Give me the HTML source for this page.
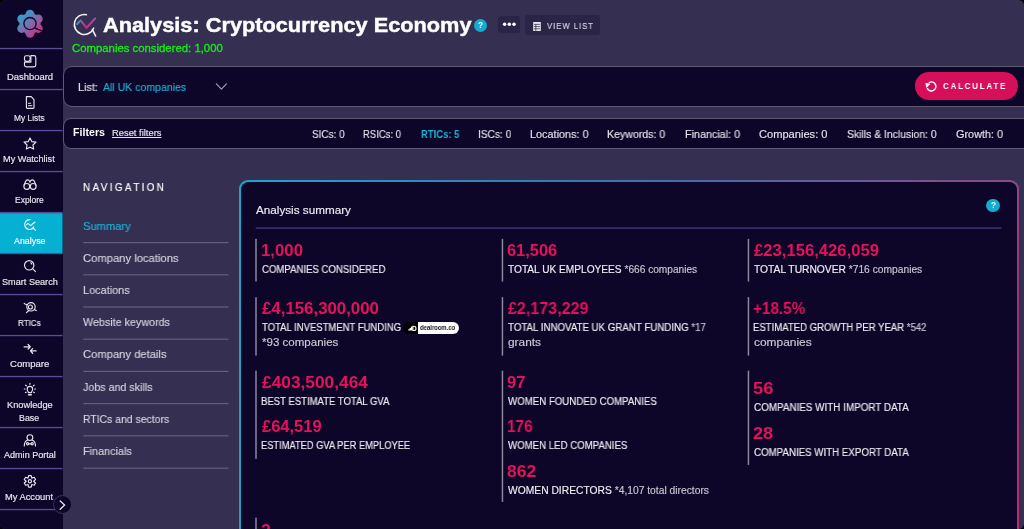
<!DOCTYPE html>
<html><head><meta charset="utf-8">
<style>
*{box-sizing:border-box;margin:0;padding:0}
html,body{width:1024px;height:529px;overflow:hidden;background:#000}
body{font-family:"Liberation Sans",sans-serif;color:#fff;position:relative}
#app{position:absolute;left:0;top:0;width:1024px;height:529px;background:#353052;border-radius:5.5px;overflow:hidden}
.r{position:absolute}
.tx{position:absolute;white-space:nowrap;line-height:1;transform-origin:0 0;will-change:transform}
.st{-webkit-text-stroke:0.15px currentColor}
.sl{position:absolute;left:0;width:62px;height:1.5px;background:#4e4596}
.nl{position:absolute;left:83px;width:145.5px;height:1.5px;background:#615c7a}
.sb{position:absolute;width:1.5px;background:#8b879a}
svg{position:absolute;overflow:visible}
</style></head><body>
<div id="app">
  <!-- sidebar -->
  <div class="r" style="left:0;top:0;width:62.5px;height:529px;background:#0e0629"></div>

  <svg style="left:0;top:0" width="63" height="529" viewBox="0 0 63 529"><rect x="0" y="213.1" width="62.6" height="40.1" fill="#05b0d2"/><rect x="0" y="47.9" width="62.6" height="1.3" fill="#564c98"/><rect x="0" y="88.9" width="62.6" height="1.3" fill="#564c98"/><rect x="0" y="129.9" width="62.6" height="1.3" fill="#564c98"/><rect x="0" y="170.9" width="62.6" height="1.3" fill="#564c98"/><rect x="0" y="211.9" width="62.6" height="1.3" fill="#564c98"/><rect x="0" y="252.9" width="62.6" height="1.3" fill="#564c98"/><rect x="0" y="293.9" width="62.6" height="1.3" fill="#564c98"/><rect x="0" y="334.9" width="62.6" height="1.3" fill="#564c98"/><rect x="0" y="375.9" width="62.6" height="1.3" fill="#564c98"/><rect x="0" y="426.9" width="62.6" height="1.3" fill="#564c98"/><rect x="0" y="467.9" width="62.6" height="1.3" fill="#564c98"/><rect x="0" y="508.9" width="62.6" height="1.3" fill="#564c98"/></svg>
  <!-- logo -->
  <svg style="left:0;top:0" width="62" height="48" viewBox="0 0 62 48">
    <defs><linearGradient id="lg" x1="-12" y1="-12" x2="12" y2="12" gradientUnits="userSpaceOnUse"><stop offset="0" stop-color="#17b2d8"/><stop offset="0.5" stop-color="#7a6cab"/><stop offset="1" stop-color="#e51f78"/></linearGradient></defs>
    <g transform="translate(30 23.7)" fill="url(#lg)">
      <circle r="10.6"/>
      <circle cx="0" cy="-9.6" r="4.4"/><circle cx="8.31" cy="-4.8" r="4.4"/><circle cx="8.31" cy="4.8" r="4.4"/>
      <circle cx="0" cy="9.6" r="4.4"/><circle cx="-8.31" cy="4.8" r="4.4"/><circle cx="-8.31" cy="-4.8" r="4.4"/>
    </g>
    <circle cx="30" cy="23.6" r="6.1" fill="none" stroke="#0e0629" stroke-width="1.3"/>
    <line x1="34.6" y1="27.8" x2="41.6" y2="30.8" stroke="#0e0629" stroke-width="1.3"/>
  </svg>
  <!-- sidebar icons -->
  <svg style="left:0;top:0" width="62" height="529" viewBox="0 0 62 529" fill="none" stroke="#e6e3ee" stroke-width="1.15" stroke-linecap="round" stroke-linejoin="round">
    <!-- dashboard -->
    <rect x="24.5" y="55.7" width="5.6" height="5.6" rx="1.7"/>
    <path d="M30.9,55.6 H33.9 Q35.8,55.6 35.8,57.5 V65 Q35.8,66.9 33.9,66.9 H26.4 Q24.5,66.9 24.5,65 V62.1 H30.9 Z"/>
    <!-- my lists -->
    <path d="M26.4,96.6 H31.2 L34,99.6 V107.4 Q34,108.3 33.1,108.3 H27.3 Q26.4,108.3 26.4,107.4 Z"/>
    <path d="M28.4,103.3 H30.6 M28.4,105.7 H31.8" stroke-width="1"/>
    <!-- star -->
    <path d="M30,137.9 L31.85,141.65 L36,142.15 L32.95,145 L33.7,149.1 L30,147.15 L26.3,149.1 L27.05,145 L24,142.15 L28.15,141.65 Z"/>
    <!-- binoculars -->
    <circle cx="26.8" cy="186.4" r="2.9"/><circle cx="33.2" cy="186.4" r="2.9"/>
    <path d="M24,185.2 L25.8,181 Q27.6,178.8 29.4,180.8 L30,182.2 L30.6,180.8 Q32.4,178.8 34.2,181 L36,185.2"/>
    <!-- analyse -->
    <path d="M30.2,219.7 A4.9,4.9 0 1 0 32.8,228.2" stroke="#f2fbfd"/>
    <path d="M26.4,224.6 L27.9,223.4 L30.6,225.6 L35,222" stroke="#f2fbfd"/>
    <path d="M33,227.9 L35.6,230.4 M33.8,226.8 L33.2,228.2" stroke="#f2fbfd"/>
    <!-- smart search -->
    <circle cx="29.2" cy="265.3" r="4.7"/>
    <path d="M32.6,268.7 L35.5,271.6"/>
    <path d="M30.8,262.8 A2.4,2.4 0 0 1 31.8,264.2"/>
    <!-- rtics -->
    <circle cx="31" cy="306.8" r="4.2"/>
    <circle cx="30.4" cy="307" r="2"/>
    <path d="M24.2,303.4 Q25.6,305 27.2,304.6 M26.4,312.6 L28.6,310.8 M34.4,309.4 L36.2,310.6"/>
    <!-- compare -->
    <path d="M24.1,346.8 H30 M28.1,344.5 L30.2,346.8 L28.1,349.1 M36,350.9 H30.6 M32.6,348.6 L30.5,350.9 L32.6,353.3" stroke-width="1.3"/>
    <!-- bulb -->
    <path d="M28.3,392.6 V391.9 Q27.2,390.8 27.2,389 A2.7,2.7 0 0 1 32.6,389 Q32.6,390.8 31.5,391.9 V392.6 Z"/>
    <path d="M28.5,394.7 H31.3" stroke-width="1.4"/>
    <path d="M29.9,383.3 V384.3 M25.6,385.2 L26.4,385.8 M34.2,385.2 L33.4,385.8 M24.3,389 H25.1 M34.7,389 H35.5 M25.4,392.6 L26.2,392.2 M34.4,392.6 L33.6,392.2"/>
    <!-- admin -->
    <circle cx="29.9" cy="437.6" r="2.9"/>
    <path d="M24.3,446 Q24.3,441.2 27.4,440.2 M35.5,446 Q35.5,441.2 32.4,440.2"/>
    <circle cx="27.6" cy="443.8" r="1.1"/><circle cx="32.2" cy="443.8" r="1.1"/><path d="M28.7,443.8 H31.1"/>
    <!-- gear -->
    <path d="M28.57,475.55 L31.23,475.55 L31.75,478.10 L34.21,477.28 L35.54,479.58 L33.60,481.30 L35.54,483.02 L34.21,485.32 L31.75,484.50 L31.23,487.05 L28.57,487.05 L28.05,484.50 L25.59,485.32 L24.26,483.02 L26.20,481.30 L24.26,479.58 L25.59,477.28 L28.05,478.10 Z"/>
    <circle cx="29.9" cy="481.3" r="1.6"/>
  </svg>
  <!-- sidebar toggle -->
  <div class="r" style="left:52.5px;top:495px;width:19px;height:19px;border-radius:50%;background:#0e0629;border:1px solid #3a325c"></div>
  <svg style="left:0;top:0" width="80" height="529" viewBox="0 0 80 529"><path d="M60.2,501 L64.6,505 L60.2,509.2" fill="none" stroke="#e6e3ee" stroke-width="1.3" stroke-linecap="round"/></svg>

  <!-- header icon -->
  <svg style="left:0;top:0" width="110" height="50" viewBox="0 0 110 50">
    <defs><linearGradient id="hg" x1="76" y1="0" x2="96" y2="0" gradientUnits="userSpaceOnUse"><stop offset="0" stop-color="#22a8d8"/><stop offset="0.5" stop-color="#d1287c"/><stop offset="1" stop-color="#8e5fb0"/></linearGradient></defs>
    <path d="M86.4,14.7 A10,10 0 1 0 93.6,28.2" fill="none" stroke="#f4f2f8" stroke-width="1.6" stroke-linecap="round"/>
    <path d="M92.4,29.6 L95.6,36" stroke="#f4f2f8" stroke-width="1.6" stroke-linecap="round"/>
    <path d="M77.2,24.2 L80.6,20.4 L86.6,27.8 L95.2,18.4" fill="none" stroke="url(#hg)" stroke-width="2" stroke-linecap="round" stroke-linejoin="round"/>
  </svg>
  <!-- ? badge -->
  <div class="r" style="left:474px;top:19px;width:13.4px;height:13.4px;border-radius:50%;background:#12acd0"></div>
  <div class="tx" style="left:478.3px;top:21px;font-size:8.4px;font-weight:700;color:#e8f7fb">?</div>
  <!-- ... button -->
  <div class="r" style="left:498.4px;top:15.5px;width:22px;height:17px;border-radius:3px;background:#2a2446"></div>
  <svg style="left:0;top:0" width="530" height="40" viewBox="0 0 530 40"><circle cx="504.6" cy="24.3" r="1.75" fill="#fff"/><circle cx="509.3" cy="24.3" r="1.75" fill="#fff"/><circle cx="514" cy="24.3" r="1.75" fill="#fff"/></svg>
  <!-- view list button -->
  <div class="r" style="left:525.2px;top:15.2px;width:75px;height:20px;border-radius:3px;background:#2a2446"></div>
  <svg style="left:0;top:0" width="600" height="40" viewBox="0 0 600 40"><rect x="533.2" y="22" width="7.6" height="9" fill="#e8e6ef"/><path d="M534,24.4 H540 M534,26.6 H540 M534,28.8 H540 M535.8,24.4 V31" stroke="#2a2446" stroke-width="0.7"/></svg>

  <!-- list bar -->
  <div class="r" style="left:62.8px;top:66.3px;width:990px;height:40.8px;background:#0e0629;border:1px solid #5d5a72;border-radius:9px"></div>
  <svg style="left:0;top:0" width="240" height="110" viewBox="0 0 240 110"><path d="M216.4,83.8 L221.4,89.2 L226.4,83.8" fill="none" stroke="#9c98ad" stroke-width="1.2" stroke-linecap="round" stroke-linejoin="round"/></svg>
  <div class="r" style="left:914.8px;top:72px;width:103.2px;height:27.5px;border-radius:14px;background:#d60f5a"></div>
  <svg style="left:0;top:0" width="1024" height="110" viewBox="0 0 1024 110"><path d="M929.4,82.4 A4.5,4.5 0 1 1 927.4,88.6" fill="none" stroke="#fff" stroke-width="1.5" stroke-linecap="round"/><path d="M925.8,83.4 L929.8,83.9 L926.6,87.4 Z" fill="#fff" stroke="#fff" stroke-width="0.7" stroke-linejoin="round"/></svg>

  <!-- filter bar -->
  <div class="r" style="left:62.8px;top:117.8px;width:990px;height:31.5px;background:#0e0629;border:1px solid #5d5a72;border-radius:8px"></div>

  <!-- nav lines -->

  <svg style="left:0;top:0" width="240" height="529" viewBox="0 0 240 529"><rect x="83.3" y="242.0" width="145.2" height="1.2" fill="#63607c"/><rect x="83.3" y="274.2" width="145.2" height="1.2" fill="#63607c"/><rect x="83.3" y="306.4" width="145.2" height="1.2" fill="#63607c"/><rect x="83.3" y="338.6" width="145.2" height="1.2" fill="#63607c"/><rect x="83.3" y="370.8" width="145.2" height="1.2" fill="#63607c"/><rect x="83.3" y="403.0" width="145.2" height="1.2" fill="#63607c"/><rect x="83.3" y="435.2" width="145.2" height="1.2" fill="#63607c"/><rect x="83.3" y="467.6" width="145.2" height="1.2" fill="#63607c"/></svg>
  <!-- card -->
  <div class="r" style="left:238.9px;top:180.2px;width:780px;height:420px;border-radius:9px;background:linear-gradient(100deg,#16a8cc 0%,#23a0c8 4%,#3080b0 33%,#5068a0 56%,#8a4a88 91%,#963672 94%,#c42a6a 100%)"></div>
  <div class="r" style="left:240.9px;top:182.2px;width:776px;height:416px;border-radius:7.5px;background:#0e0629"></div>
  <svg style="left:0;top:0" width="1024" height="240" viewBox="0 0 1024 240"><rect x="255.8" y="227.4" width="745.6" height="1.3" fill="#473d7c"/></svg>
  <div class="r" style="left:986.4px;top:198.6px;width:13.4px;height:13.4px;border-radius:50%;background:#12acd0"></div>
  <div class="tx" style="left:990.7px;top:200.8px;font-size:8.4px;font-weight:700;color:#e8f7fb">?</div>

  <!-- stat borders -->

  <svg style="left:0;top:0" width="1024" height="529" viewBox="0 0 1024 529"><rect x="255.25" y="238.9" width="1.5" height="42.6" fill="#8b879a"/><rect x="501.7" y="238.9" width="1.5" height="42.6" fill="#8b879a"/><rect x="747.7" y="238.9" width="1.5" height="42.6" fill="#8b879a"/><rect x="255.25" y="297.1" width="1.5" height="58.5" fill="#8b879a"/><rect x="501.7" y="297.1" width="1.5" height="58.5" fill="#8b879a"/><rect x="747.7" y="297.1" width="1.5" height="58.5" fill="#8b879a"/><rect x="255.25" y="370.70000000000005" width="1.5" height="88.2" fill="#8b879a"/><rect x="501.7" y="370.70000000000005" width="1.5" height="131.2" fill="#8b879a"/><rect x="747.7" y="370.70000000000005" width="1.5" height="94.2" fill="#8b879a"/><rect x="255.25" y="517.6" width="1.5" height="20.2" fill="#8b879a"/></svg>
  <!-- dealroom badge -->
  <div class="r" style="left:417px;top:321.9px;width:42.2px;height:11.9px;border-radius:0 6px 6px 0;background:#fff"></div>
  <div class="r" style="left:402.5px;top:321.9px;width:15.5px;height:11.9px;border-radius:6px 0 0 6px;background:#000"></div>
  <svg style="left:0;top:0" width="470" height="340" viewBox="0 0 470 340"><path d="M408.3,330.6 v-1.4 h1.3 v-1.3 h1.3 v-1.4 h1.6 v4.1 Z" fill="#fff"/><path d="M412.9,326.3 h1 a2.1,2.1 0 0 1 0,4.2 h-1 Z" fill="none" stroke="#fff" stroke-width="1.1"/></svg>

<div class="tx st" id="t0" style="left:6.54px;top:72.70px;font-size:8.4px;font-weight:400;color:#e9e7ef;letter-spacing:0px;transform:scaleX(1.1255);">Dashboard</div>
<div class="tx st" id="t1" style="left:14.20px;top:113.70px;font-size:8.4px;font-weight:400;color:#e9e7ef;letter-spacing:0px;transform:scaleX(0.9950);">My Lists</div>
<div class="tx st" id="t2" style="left:3.45px;top:154.70px;font-size:8.4px;font-weight:400;color:#e9e7ef;letter-spacing:0px;transform:scaleX(1.0979);">My Watchlist</div>
<div class="tx st" id="t3" style="left:15.39px;top:196.10px;font-size:8.4px;font-weight:400;color:#e9e7ef;letter-spacing:0px;transform:scaleX(1.0126);">Explore</div>
<div class="tx st" id="t4" style="left:14.36px;top:236.60px;font-size:8.4px;font-weight:400;color:#f4fbfd;letter-spacing:0px;transform:scaleX(1.0567);">Analyse</div>
<div class="tx st" id="t5" style="left:1.83px;top:277.90px;font-size:8.4px;font-weight:400;color:#e9e7ef;letter-spacing:0px;transform:scaleX(1.0897);">Smart Search</div>
<div class="tx st" id="t6" style="left:18.22px;top:319.00px;font-size:8.4px;font-weight:400;color:#e9e7ef;letter-spacing:0px;transform:scaleX(0.9609);">RTICs</div>
<div class="tx st" id="t7" style="left:10.12px;top:359.90px;font-size:8.4px;font-weight:400;color:#e9e7ef;letter-spacing:0px;transform:scaleX(1.1382);">Compare</div>
<div class="tx st" id="t8" style="left:6.95px;top:401.00px;font-size:8.4px;font-weight:400;color:#e9e7ef;letter-spacing:0px;transform:scaleX(1.1043);">Knowledge</div>
<div class="tx st" id="t9" style="left:19.27px;top:413.70px;font-size:8.4px;font-weight:400;color:#e9e7ef;letter-spacing:0px;transform:scaleX(1.0541);">Base</div>
<div class="tx st" id="t10" style="left:4.27px;top:451.40px;font-size:8.4px;font-weight:400;color:#e9e7ef;letter-spacing:0px;transform:scaleX(1.0813);">Admin Portal</div>
<div class="tx st" id="t11" style="left:5.35px;top:492.70px;font-size:8.4px;font-weight:400;color:#e9e7ef;letter-spacing:0px;transform:scaleX(1.1093);">My Account</div>
<div class="tx" id="t12" style="left:102.88px;top:15.20px;font-size:20.8px;font-weight:700;color:#ffffff;letter-spacing:0px;transform:scaleX(1.0455);-webkit-text-stroke:0.45px #fff;">Analysis: Cryptocurrency Economy</div>
<div class="tx st" id="t13" style="left:72.46px;top:42.80px;font-size:10.6px;font-weight:400;color:#12f012;letter-spacing:0px;transform:scaleX(1.0714);-webkit-text-stroke:0.3px #12f012;">Companies considered: 1,000</div>
<div class="tx st" id="t14" style="left:547.10px;top:21.20px;font-size:9.8px;font-weight:400;color:#dcd8e6;letter-spacing:1.2px;transform:scaleX(0.7914);">VIEW LIST</div>
<div class="tx st" id="t15" style="left:77.78px;top:81.70px;font-size:11.3px;font-weight:400;color:#e2dfea;letter-spacing:0px;transform:scaleX(0.9610);">List:</div>
<div class="tx st" id="t16" style="left:103.00px;top:81.70px;font-size:11.3px;font-weight:400;color:#1cb2d8;letter-spacing:0px;transform:scaleX(0.9326);">All UK companies</div>
<div class="tx" id="t17" style="left:943.48px;top:82.00px;font-size:9.3px;font-weight:700;color:#ffffff;letter-spacing:2.0px;transform:scaleX(0.8641);">CALCULATE</div>
<div class="tx" id="t18" style="left:73.19px;top:127.40px;font-size:10.5px;font-weight:700;color:#ffffff;letter-spacing:0px;transform:scaleX(1.0146);">Filters</div>
<div class="tx st" id="t19" style="left:111.78px;top:129.40px;font-size:9.0px;font-weight:400;color:#e6e3ee;letter-spacing:0px;transform:scaleX(1.0404);text-decoration:underline;text-underline-offset:1px;">Reset filters</div>
<div class="tx st" id="t20" style="left:311.57px;top:128.60px;font-size:10.9px;font-weight:400;color:#e3e0ea;letter-spacing:0px;transform:scaleX(0.9135);">SICs: 0</div>
<div class="tx st" id="t21" style="left:363.15px;top:128.60px;font-size:10.9px;font-weight:400;color:#e3e0ea;letter-spacing:0px;transform:scaleX(0.8702);">RSICs: 0</div>
<div class="tx" id="t22" style="left:420.75px;top:128.60px;font-size:10.9px;font-weight:600;color:#1cb2d8;letter-spacing:0px;transform:scaleX(0.8694);">RTICs: 5</div>
<div class="tx st" id="t23" style="left:478.00px;top:128.60px;font-size:10.9px;font-weight:400;color:#e3e0ea;letter-spacing:0px;transform:scaleX(0.9295);">ISCs: 0</div>
<div class="tx st" id="t24" style="left:529.75px;top:128.60px;font-size:10.9px;font-weight:400;color:#e3e0ea;letter-spacing:0px;transform:scaleX(0.9957);">Locations: 0</div>
<div class="tx st" id="t25" style="left:607.17px;top:128.60px;font-size:10.9px;font-weight:400;color:#e3e0ea;letter-spacing:0px;transform:scaleX(0.9729);">Keywords: 0</div>
<div class="tx st" id="t26" style="left:684.96px;top:128.60px;font-size:10.9px;font-weight:400;color:#e3e0ea;letter-spacing:0px;transform:scaleX(0.9881);">Financial: 0</div>
<div class="tx st" id="t27" style="left:759.09px;top:128.60px;font-size:10.9px;font-weight:400;color:#e3e0ea;letter-spacing:0px;transform:scaleX(1.0195);">Companies: 0</div>
<div class="tx st" id="t28" style="left:847.06px;top:128.60px;font-size:10.9px;font-weight:400;color:#e3e0ea;letter-spacing:0px;transform:scaleX(0.9551);">Skills &amp; Inclusion: 0</div>
<div class="tx st" id="t29" style="left:955.95px;top:128.60px;font-size:10.9px;font-weight:400;color:#e3e0ea;letter-spacing:0px;transform:scaleX(0.9947);">Growth: 0</div>
<div class="tx st" id="t30" style="left:82.62px;top:182.40px;font-size:10.9px;font-weight:400;color:#ffffff;letter-spacing:2.6px;transform:scaleX(0.9097);">NAVIGATION</div>
<div class="tx st" id="t31" style="left:82.82px;top:221.00px;font-size:11.5px;font-weight:400;color:#1cb2d8;letter-spacing:0px;transform:scaleX(0.9682);">Summary</div>
<div class="tx st" id="t32" style="left:82.81px;top:253.20px;font-size:11.5px;font-weight:400;color:#d6d3de;letter-spacing:0px;transform:scaleX(0.9773);">Company locations</div>
<div class="tx st" id="t33" style="left:82.59px;top:285.00px;font-size:11.5px;font-weight:400;color:#d6d3de;letter-spacing:0px;transform:scaleX(0.9492);">Locations</div>
<div class="tx st" id="t34" style="left:83.30px;top:317.20px;font-size:11.5px;font-weight:400;color:#d6d3de;letter-spacing:0px;transform:scaleX(0.9333);">Website keywords</div>
<div class="tx st" id="t35" style="left:82.81px;top:349.40px;font-size:11.5px;font-weight:400;color:#d6d3de;letter-spacing:0px;transform:scaleX(0.9753);">Company details</div>
<div class="tx st" id="t36" style="left:83.30px;top:381.80px;font-size:11.5px;font-weight:400;color:#d6d3de;letter-spacing:0px;transform:scaleX(0.9302);">Jobs and skills</div>
<div class="tx st" id="t37" style="left:82.62px;top:414.00px;font-size:11.5px;font-weight:400;color:#d6d3de;letter-spacing:0px;transform:scaleX(0.9074);">RTICs and sectors</div>
<div class="tx st" id="t38" style="left:82.59px;top:446.00px;font-size:11.5px;font-weight:400;color:#d6d3de;letter-spacing:0px;transform:scaleX(0.9438);">Financials</div>
<div class="tx st" id="t39" style="left:255.80px;top:203.90px;font-size:11.7px;font-weight:400;color:#f0eef4;letter-spacing:0px;transform:scaleX(1.0011);">Analysis summary</div>
<div class="tx" id="t40" style="left:260.78px;top:241.50px;font-size:16.4px;font-weight:700;color:#e3125b;letter-spacing:0px;transform:scaleX(1.0228);">1,000</div>
<div class="tx st" id="t41" style="left:261.56px;top:264.80px;font-size:10.0px;font-weight:400;color:#efedf3;letter-spacing:0px;transform:scaleX(0.9591);">COMPANIES CONSIDERED</div>
<div class="tx" id="t42" style="left:507.40px;top:241.50px;font-size:16.4px;font-weight:700;color:#e3125b;letter-spacing:0px;transform:scaleX(0.9949);">61,506</div>
<div class="tx st" id="t43" style="left:507.90px;top:264.80px;font-size:10.0px;font-weight:400;color:#efedf3;letter-spacing:0px;transform:scaleX(1.0139);">TOTAL UK EMPLOYEES <span style="color:#cbc7d3">*666 companies</span></div>
<div class="tx" id="t44" style="left:753.90px;top:241.50px;font-size:16.4px;font-weight:700;color:#e3125b;letter-spacing:0px;transform:scaleX(1.0163);">£23,156,426,059</div>
<div class="tx st" id="t45" style="left:753.90px;top:264.80px;font-size:10.0px;font-weight:400;color:#efedf3;letter-spacing:0px;transform:scaleX(1.0250);">TOTAL TURNOVER <span style="color:#cbc7d3">*716 companies</span></div>
<div class="tx" id="t46" style="left:261.80px;top:300.10px;font-size:16.4px;font-weight:700;color:#e3125b;letter-spacing:0px;transform:scaleX(1.0264);">£4,156,300,000</div>
<div class="tx st" id="t47" style="left:261.80px;top:323.30px;font-size:10.0px;font-weight:400;color:#efedf3;letter-spacing:0px;transform:scaleX(0.9509);">TOTAL INVESTMENT FUNDING</div>
<div class="tx st" id="t48" style="left:261.80px;top:338.30px;font-size:10.0px;font-weight:400;color:#efedf3;letter-spacing:0px;transform:scaleX(1.1545);"><span style="color:#cbc7d3">*93 companies</span></div>
<div class="tx" id="t49" style="left:507.90px;top:300.10px;font-size:16.4px;font-weight:700;color:#e3125b;letter-spacing:0px;transform:scaleX(0.9804);">£2,173,229</div>
<div class="tx st" id="t50" style="left:507.90px;top:323.30px;font-size:10.0px;font-weight:400;color:#efedf3;letter-spacing:0px;transform:scaleX(0.9710);">TOTAL INNOVATE UK GRANT FUNDING <span style="color:#cbc7d3">*17</span></div>
<div class="tx st" id="t51" style="left:507.60px;top:338.30px;font-size:10.0px;font-weight:400;color:#efedf3;letter-spacing:0px;transform:scaleX(1.1855);"><span style="color:#cbc7d3">grants</span></div>
<div class="tx" id="t52" style="left:753.43px;top:300.10px;font-size:16.4px;font-weight:700;color:#e3125b;letter-spacing:0px;transform:scaleX(0.9321);">+18.5%</div>
<div class="tx st" id="t53" style="left:753.18px;top:323.30px;font-size:10.0px;font-weight:400;color:#efedf3;letter-spacing:0px;transform:scaleX(0.9564);">ESTIMATED GROWTH PER YEAR <span style="color:#cbc7d3">*542</span></div>
<div class="tx st" id="t54" style="left:753.60px;top:338.30px;font-size:10.0px;font-weight:400;color:#efedf3;letter-spacing:0px;transform:scaleX(1.1938);"><span style="color:#cbc7d3">companies</span></div>
<div class="tx" id="t55" style="left:261.80px;top:373.60px;font-size:16.4px;font-weight:700;color:#e3125b;letter-spacing:0px;transform:scaleX(1.0564);">£403,500,464</div>
<div class="tx st" id="t56" style="left:261.08px;top:397.20px;font-size:10.0px;font-weight:400;color:#efedf3;letter-spacing:0px;transform:scaleX(0.9537);">BEST ESTIMATE TOTAL GVA</div>
<div class="tx" id="t57" style="left:261.80px;top:418.20px;font-size:16.4px;font-weight:700;color:#e3125b;letter-spacing:0px;transform:scaleX(1.0060);">£64,519</div>
<div class="tx st" id="t58" style="left:261.10px;top:441.40px;font-size:10.0px;font-weight:400;color:#efedf3;letter-spacing:0px;transform:scaleX(0.9306);">ESTIMATED GVA PER EMPLOYEE</div>
<div class="tx" id="t59" style="left:507.39px;top:373.70px;font-size:16.4px;font-weight:700;color:#e3125b;letter-spacing:0px;transform:scaleX(1.0118);">97</div>
<div class="tx st" id="t60" style="left:507.90px;top:396.80px;font-size:10.0px;font-weight:400;color:#efedf3;letter-spacing:0px;transform:scaleX(0.9687);">WOMEN FOUNDED COMPANIES</div>
<div class="tx" id="t61" style="left:506.96px;top:418.10px;font-size:16.4px;font-weight:700;color:#e3125b;letter-spacing:0px;transform:scaleX(0.9359);">176</div>
<div class="tx st" id="t62" style="left:507.90px;top:441.10px;font-size:10.0px;font-weight:400;color:#efedf3;letter-spacing:0px;transform:scaleX(0.9644);">WOMEN LED COMPANIES</div>
<div class="tx" id="t63" style="left:507.36px;top:462.50px;font-size:16.4px;font-weight:700;color:#e3125b;letter-spacing:0px;transform:scaleX(1.0705);">862</div>
<div class="tx st" id="t64" style="left:507.90px;top:485.80px;font-size:10.0px;font-weight:400;color:#efedf3;letter-spacing:0px;transform:scaleX(1.0284);">WOMEN DIRECTORS <span style="color:#cbc7d3">*4,107 total directors</span></div>
<div class="tx" id="t65" style="left:753.34px;top:380.00px;font-size:16.4px;font-weight:700;color:#e3125b;letter-spacing:0px;transform:scaleX(1.1188);">56</div>
<div class="tx st" id="t66" style="left:753.65px;top:403.20px;font-size:10.0px;font-weight:400;color:#efedf3;letter-spacing:0px;transform:scaleX(0.9863);">COMPANIES WITH IMPORT DATA</div>
<div class="tx" id="t67" style="left:753.35px;top:424.50px;font-size:16.4px;font-weight:700;color:#e3125b;letter-spacing:0px;transform:scaleX(1.1072);">28</div>
<div class="tx st" id="t68" style="left:753.66px;top:447.70px;font-size:10.0px;font-weight:400;color:#efedf3;letter-spacing:0px;transform:scaleX(0.9723);">COMPANIES WITH EXPORT DATA</div>
<div class="tx" id="t69" style="left:261.26px;top:522.00px;font-size:16.4px;font-weight:700;color:#e3125b;letter-spacing:0px;transform:scaleX(1.0875);">2</div>
<div class="tx" id="t70" style="left:419.98px;top:325.20px;font-size:6.6px;font-weight:700;color:#161616;letter-spacing:0px;transform:scaleX(0.8981);">dealroom.co</div>

  <!-- window corners -->
</div>
</body></html>
